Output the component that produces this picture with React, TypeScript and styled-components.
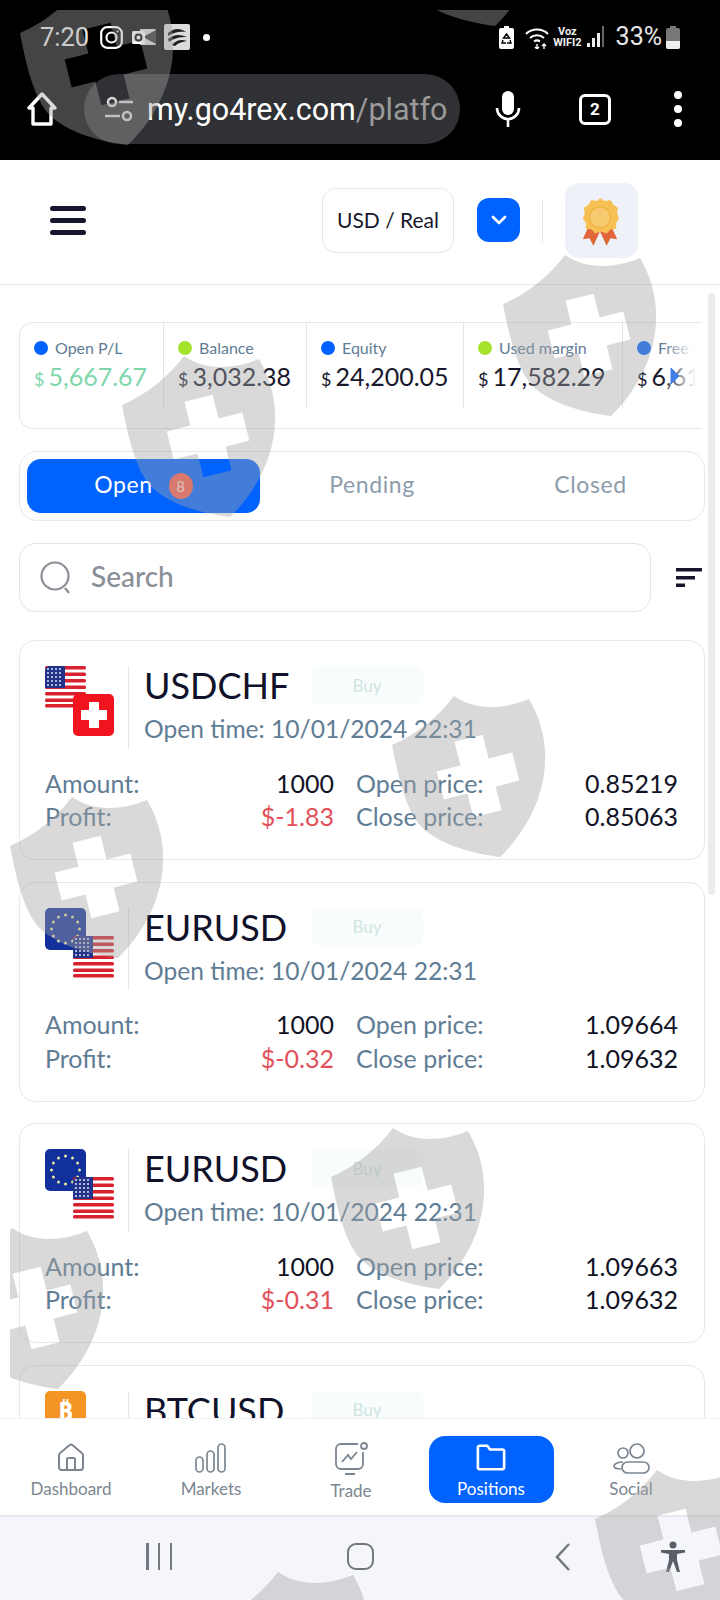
import React from 'react'
import styled, { createGlobalStyle } from 'styled-components'
import { ChevronDown, House } from 'lucide-react'

const GlobalStyle = createGlobalStyle`
  html, body {
    margin: 0;
    padding: 0;
    background: #fff;
  }
  * {
    box-sizing: border-box;
  }
`

const Phone = styled.div`
  position: relative;
  width: 720px;
  height: 1600px;
  overflow: hidden;
  display: flex;
  flex-direction: column;
  background: #fff;
  font-family: Lato, 'Noto Sans', sans-serif;
`

/* android status bar and browser toolbar */
const BlackTop = styled.div`
  height: 160px;
  flex: none;
  background: #000;
  color: #fff;
  font-family: Roboto, sans-serif;
`

const StatusBar = styled.div`
  height: 74px;
  padding: 25px 40px 0;
  display: flex;
  align-items: flex-start;
`

const Clock = styled.span`
  font-size: 25.5px;
  line-height: 24px;
  color: #e8e8e8;
  width: 60px;
`

const StatusIcons = styled.div`
  display: flex;
  align-items: center;
  gap: 8px;
  height: 24px;
`

const NotifyDot = styled.i`
  width: 7px;
  height: 7px;
  margin-left: 5px;
  border-radius: 50%;
  background: #fff;
`

const StatusRight = styled.div`
  margin-left: auto;
  display: flex;
  align-items: center;
  height: 24px;
`

const VoWifi = styled.div`
  font-size: 11px;
  line-height: 11px;
  font-weight: 700;
  text-align: center;
  margin: 0 5px 0 4px;
  color: #eee;
`

const Percent = styled.span`
  font-size: 25px;
  line-height: 24px;
  color: #e8e8e8;
  margin: 0 4px 0 11px;
`

const Toolbar = styled.div`
  height: 70px;
  display: flex;
  align-items: center;
  padding-left: 27px;
`

const UrlPill = styled.div`
  width: 376px;
  height: 70px;
  margin-left: 27px;
  padding-left: 21px;
  border-radius: 35px;
  background: #303134;
  display: flex;
  align-items: center;
  gap: 14px;
  font-size: 30.5px;
  white-space: nowrap;
  overflow: hidden;
`

const UrlPath = styled.span`
  color: #9a9a9a;
`

const TabCount = styled.div`
  width: 32px;
  height: 31px;
  margin-left: 58px;
  border: 3px solid #fff;
  border-radius: 6px;
  display: flex;
  align-items: center;
  justify-content: center;
  font-size: 17px;
  font-weight: 700;
`

const Kebab = styled.div`
  margin-left: 63px;
  display: flex;
  flex-direction: column;
  gap: 6px;
  i {
    width: 8px;
    height: 8px;
    border-radius: 50%;
    background: #fff;
  }
`

/* app header */
const Header = styled.header`
  height: 125px;
  flex: none;
  border-bottom: 1px solid #e6e6e8;
  display: flex;
  align-items: center;
  padding: 0 82px 4px 50px;
`

const Burger = styled.div`
  width: 36px;
  margin-right: auto;
  display: flex;
  flex-direction: column;
  gap: 7px;
  i {
    height: 5px;
    border-radius: 3px;
    background: #15152e;
  }
`

const AccountBox = styled.div`
  width: 132px;
  height: 65px;
  padding-bottom: 2px;
  border: 1px solid #e4e6ea;
  border-radius: 14px;
  display: flex;
  align-items: center;
  justify-content: center;
  font-size: 21px;
  color: #17182b;
`

const ChevronButton = styled.div`
  width: 43px;
  height: 44px;
  margin-left: 23px;
  border-radius: 12px;
  background: #0062ff;
  color: #fff;
  display: flex;
  align-items: center;
  justify-content: center;
`

const HeaderRule = styled.div`
  width: 1px;
  height: 43px;
  margin: 0 22px;
  background: #e4e6ea;
`

const RibbonBox = styled.div`
  width: 73px;
  height: 75px;
  padding: 4px 4px 0 0;
  border-radius: 14px;
  background: #eef2f8;
  display: flex;
  align-items: center;
  justify-content: center;
`

/* scrolling content */
const Main = styled.main`
  position: relative;
  flex: 1;
  min-height: 0;
  overflow: hidden;
  padding: 37px 15px 0 19px;
`

const Scrollbar = styled.div`
  position: absolute;
  top: 8px;
  right: 5px;
  width: 7px;
  height: 602px;
  border-radius: 4px;
  background: #ececee;
`

const Summary = styled.div`
  position: relative;
  height: 107px;
  margin-right: 3px;
  border: 1px solid #e6e8ec;
  border-right: none;
  border-radius: 14px 0 0 14px;
  display: flex;
  overflow: hidden;
`

const SummaryCell = styled.div<{ $width: number }>`
  flex: 0 0 ${p => p.$width}px;
  height: 85px;
  padding: 15px 0 0 14px;
  border-right: 1px solid #e3e5e9;
  white-space: nowrap;
`

const SummaryLabel = styled.div`
  display: flex;
  align-items: center;
  gap: 7px;
  font-size: 16px;
  line-height: 20px;
  color: #5f7d95;
`

const Dot = styled.i<{ $color: string }>`
  width: 14px;
  height: 14px;
  border-radius: 50%;
  background: ${p => p.$color};
`

const SummaryValue = styled.div<{ $color: string }>`
  margin-top: 2px;
  font-size: 25px;
  line-height: 32px;
  color: ${p => p.$color};
  small {
    font-size: 18px;
    margin-right: 4px;
  }
`

const SummaryFade = styled.div`
  position: absolute;
  top: 0;
  right: 0;
  bottom: 0;
  width: 40px;
  background: linear-gradient(to right, rgba(255, 255, 255, 0), #fff 85%);
`

const NextArrow = styled.svg`
  position: absolute;
  top: 44px;
  right: 22px;
`

const Tabs = styled.div`
  height: 70px;
  margin-top: 22px;
  padding: 7px;
  border: 1px solid #e6e8ec;
  border-radius: 18px;
  display: grid;
  grid-template-columns: 233px 224px 1fr;
  align-items: center;
`

const Tab = styled.div<{ $active?: boolean }>`
  height: 54px;
  padding-bottom: 5px;
  border-radius: 14px;
  display: flex;
  align-items: center;
  justify-content: center;
  gap: 16px;
  font-size: 23px;
  letter-spacing: 0.6px;
  color: ${p => (p.$active ? '#fff' : '#8c9cab')};
  background: ${p => (p.$active ? '#0062ff' : 'transparent')};
`

const TabBadge = styled.span`
  width: 24px;
  height: 26px;
  margin-top: 5px;
  border-radius: 50%;
  background: #ff5a45;
  display: flex;
  align-items: center;
  justify-content: center;
  font-size: 15px;
  letter-spacing: 0;
  color: #ffd9d2;
`

const SearchRow = styled.div`
  margin-top: 22px;
  padding-right: 3px;
  display: flex;
  align-items: center;
  justify-content: space-between;
`

const SearchBox = styled.div`
  width: 632px;
  height: 69px;
  padding: 0 0 3px 20px;
  border: 1px solid #e2e4e8;
  border-radius: 16px;
  display: flex;
  align-items: center;
  gap: 19px;
  font-size: 28px;
  font-weight: 500;
  color: #8a8f96;
`

const Cards = styled.div`
  margin-top: 28px;
  display: flex;
  flex-direction: column;
  gap: 21.5px;
`

const Card = styled.article`
  flex: none;
  height: 220px;
  padding: 25px 24px 0 25px;
  border: 1px solid #e6e8ec;
  border-radius: 16px;
`

const CardTop = styled.div`
  display: flex;
  height: 82px;
`

const FlagSlot = styled.div`
  width: 84px;
  border-right: 1px solid #e3e5e9;
`

const CardHead = styled.div`
  margin-left: 15px;
`

const TitleRow = styled.div`
  display: flex;
  align-items: center;
  height: 38px;
`

const Symbol = styled.div`
  width: 167px;
  font-size: 36px;
  line-height: 38px;
  color: #10122a;
`

const BuyChip = styled.div`
  width: 112px;
  height: 38px;
  border-radius: 8px;
  background: #f9fcfc;
  display: flex;
  align-items: center;
  justify-content: center;
  font-size: 17px;
  color: #cde6e0;
`

const OpenTime = styled.div`
  margin-top: 10px;
  font-size: 24.6px;
  line-height: 30px;
  color: #5f7d95;
`

const StatGrid = styled.div`
  margin-top: 18px;
  display: grid;
  grid-template-columns: 289px 322px;
  column-gap: 22px;
`

const Stat = styled.div`
  height: 33.5px;
  display: flex;
  align-items: center;
  justify-content: space-between;
  font-size: 25px;
  color: #5f7d95;
`

const StatValue = styled.span<{ $loss?: boolean }>`
  color: ${p => (p.$loss ? '#e2515a' : '#111325')};
`

/* bottom navigation */
const BottomNav = styled.nav`
  position: relative;
  height: 99px;
  flex: none;
  padding: 17px 19px 16px 1px;
  background: #fff;
  border-top: 1px solid #eff0f2;
  border-bottom: 2px solid #e6e7ea;
  display: grid;
  grid-template-columns: repeat(5, 140px);
`

const NavItem = styled.div<{ $active?: boolean }>`
  justify-self: center;
  width: ${p => (p.$active ? '125px' : '120px')};
  border-radius: 16px;
  display: flex;
  flex-direction: column;
  align-items: center;
  gap: ${p => (p.$active ? '5px' : '3px')};
  padding-top: 6px;
  font-size: 17px;
  line-height: 24px;
  color: ${p => (p.$active ? '#fff' : '#7b8691')};
  background: ${p => (p.$active ? '#0062ff' : 'transparent')};
`

const SystemNav = styled.div`
  flex: none;
  height: 83px;
  background: #f5f6fb;
  padding: 26px 34px 0 146px;
  display: flex;
  align-items: flex-start;
  color: #6f7278;
`

const MenuLines = styled.div`
  width: 26px;
  height: 27px;
  display: flex;
  justify-content: space-between;
  i {
    width: 2.5px;
    background: #74777d;
  }
`

const HomeSquare = styled.div`
  width: 27px;
  height: 27px;
  margin-left: 175px;
  border: 2.5px solid #74777d;
  border-radius: 9px;
`

const BackGap = styled.div`
  margin-left: 181px;
`

const PersonGap = styled.div`
  margin-left: 89px;
  margin-top: -2px;
`

/* the translucent shields over the whole photo */
const Watermark = styled.svg`
  position: absolute;
  top: 10px;
  left: 10px;
  pointer-events: none;
`

const crossPath = () => {
  const a = 39
  const b = 14.5
  const pts = [
    [-b, -a], [b, -a], [b, -b], [a, -b], [a, b], [b, b],
    [b, a], [-b, a], [-b, b], [-a, b], [-a, -b], [-b, -b],
  ]
  const cos = Math.cos((14 * Math.PI) / 180)
  const sin = Math.sin((14 * Math.PI) / 180)
  const out = pts.map(([x, y]) => `${(86 + x * cos + y * sin).toFixed(1)} ${(80 - x * sin + y * cos).toFixed(1)}`)
  return `M${out.join('L')}Z`
}

const shieldPath =
  'M0 49C25 38 45 22 62 0C82 14 110 14 137 3C148 22 154 42 153 66C152 100 135 135 108 161C85 158 45 150 26 127C12 108 5 75 0 49Z' +
  crossPath()

const shields = [
  [20, -16], [387, -135], [503, 255], [122, 356], [392, 696],
  [10, 797], [331, 1128], [-50, 1228], [595, 1470], [216, 1572],
]

const Shields = () => (
  <Watermark width="710" height="1590" viewBox="10 10 710 1590">
    {shields.map(([x, y]) => (
      <path
        key={`${x}-${y}`}
        d={shieldPath}
        transform={`translate(${x} ${y})`}
        fill="rgba(163,163,163,0.416)"
        fillRule="evenodd"
      />
    ))}
  </Watermark>
)

const UsFlag = () => (
  <>
    <rect width="41" height="42" rx="5" fill="#fff" />
    {[0, 6.5, 13, 19.5, 26, 32.5, 38].map(y => (
      <rect key={y} y={y} width="41" height="3.6" rx="1.5" fill="#d8232f" />
    ))}
    <path d="M0 5a5 5 0 0 1 5-5h15v22H0z" fill="#22338a" />
    {[3, 7, 11, 15, 19].map(y =>
      [3, 7, 11, 15].map(x => <circle key={`${x}${y}`} cx={x} cy={y} r="1" fill="#dfe4f5" />)
    )}
  </>
)

const SwissFlag = () => (
  <>
    <rect width="41" height="42" rx="5" fill="#f0141e" />
    <path d="M16 8h10v8h8v10h-8v8H16v-8H8V16h8z" fill="#fff" />
  </>
)

const EuFlag = () => (
  <>
    <rect width="41" height="42" rx="5" fill="#12309b" />
    {Array.from({ length: 12 }, (_, i) => {
      const a = (i * Math.PI) / 6
      return <circle key={i} cx={20.5 + 14 * Math.cos(a)} cy={21 + 14 * Math.sin(a)} r="1.5" fill="#e8e6a0" />
    })}
  </>
)

const BtcFlag = () => (
  <>
    <rect width="41" height="42" rx="5" fill="#f39425" />
    <text x="20.5" y="30" textAnchor="middle" fontFamily="'Noto Sans', sans-serif" fontSize="26" fontWeight="700" fill="#fff">
      ₿
    </text>
  </>
)

const flagMap = { US: UsFlag, CH: SwissFlag, EU: EuFlag, BTC: BtcFlag }

const FlagPair = ({ first, second }: { first: keyof typeof flagMap; second?: keyof typeof flagMap }) => {
  const A = flagMap[first]
  const B = second ? flagMap[second] : null
  return (
    <svg width="69" height="70" viewBox="0 0 69 70">
      <g>
        <A />
      </g>
      {B && (
        <g transform="translate(28 28)">
          <B />
        </g>
      )}
    </svg>
  )
}

const positions = [
  { symbol: 'USDCHF', a: 'US', b: 'CH', open: '0.85219', close: '0.85063', profit: '$-1.83' },
  { symbol: 'EURUSD', a: 'EU', b: 'US', open: '1.09664', close: '1.09632', profit: '$-0.32' },
  { symbol: 'EURUSD', a: 'EU', b: 'US', open: '1.09663', close: '1.09632', profit: '$-0.31' },
  { symbol: 'BTCUSD', a: 'BTC', open: '', close: '', profit: '' },
] as const

const stats = [
  { label: 'Open P/L', value: '5,667.67', dot: '#0062ff', color: '#7fd6ad', width: 144 },
  { label: 'Balance', value: '3,032.38', dot: '#a4e22b', color: '#17182b', width: 143 },
  { label: 'Equity', value: '24,200.05', dot: '#0062ff', color: '#17182b', width: 157 },
  { label: 'Used margin', value: '17,582.29', dot: '#a4e22b', color: '#17182b', width: 159 },
  { label: 'Free margin', value: '6,617.76', dot: '#0062ff', color: '#17182b', width: 159 },
]

export default function App() {
  return (
    <Phone>
      <GlobalStyle />
      <BlackTop>
        <StatusBar>
          <Clock>7:20</Clock>
          <StatusIcons>
            <svg width="23" height="23" viewBox="0 0 23 23" fill="none" stroke="#fff" strokeWidth="2.2">
              <rect x="1.2" y="1.2" width="20.6" height="20.6" rx="6" />
              <circle cx="11.5" cy="11.5" r="5" />
              <circle cx="17.5" cy="5.5" r="1" fill="#fff" stroke="none" />
            </svg>
            <svg width="25" height="22" viewBox="0 0 25 22">
              <rect x="9" y="3" width="16" height="16" rx="1" fill="#d8d8d8" />
              <path d="M12 11l13-7v14z" fill="#333" />
              <rect x="1" y="5" width="13" height="13" rx="1.5" fill="#fff" />
              <circle cx="7.5" cy="11.5" r="3" fill="none" stroke="#000" strokeWidth="2" />
            </svg>
            <svg width="26" height="26" viewBox="0 0 26 26">
              <rect width="26" height="26" rx="2" fill="#dcdcdc" />
              <path d="M4 9C10 4 16 4 22 8C16 7 10 8 4 12zM4 15C10 10 16 10 23 13C16 13 10 14 5 18zM8 21C12 16 17 15 23 17C18 18 14 19 11 22z" fill="#222" />
            </svg>
            <NotifyDot />
          </StatusIcons>
          <StatusRight>
            <svg width="15" height="23" viewBox="0 0 15 23">
              <path d="M5 0h5v2h3a2 2 0 0 1 2 2v17a2 2 0 0 1-2 2H2a2 2 0 0 1-2-2V4a2 2 0 0 1 2-2h3z" fill="#fff" />
              <path d="M7.500 8l3 4h-6zM4 14l-1 3h4M11 14l1 3H8" fill="none" stroke="#000" strokeWidth="1.4" />
            </svg>
            <svg width="24" height="23" viewBox="0 0 24 23" fill="none" stroke="#fff" strokeWidth="2" style={{ marginLeft: 11 }}>
              <path d="M1 8a16 16 0 0 1 22 0M5 12a10.500 10.500 0 0 1 14 0M9 15.500a5 5 0 0 1 6 0" />
              <path d="M12 18v5M10 21l2 2 2-2M19 23v-5M17 20l2-2 2 2" strokeWidth="1.4" />
            </svg>
            <VoWifi>
              Voz
              <br />
              WIFI2
            </VoWifi>
            <svg width="18" height="24" viewBox="0 0 18 24" fill="#eee">
              <rect x="0" y="18" width="3" height="4" />
              <rect x="5" y="13" width="3" height="9" />
              <rect x="10" y="8" width="3" height="14" />
              <rect x="15" y="1" width="2" height="21" fill="#666" />
            </svg>
            <Percent>33%</Percent>
            <svg width="14" height="23" viewBox="0 0 14 23">
              <path d="M4 0h6v2h2a2 2 0 0 1 2 2v17a2 2 0 0 1-2 2H2a2 2 0 0 1-2-2V4a2 2 0 0 1 2-2h2z" fill="#777" />
              <path d="M0 15h14v6a2 2 0 0 1-2 2H2a2 2 0 0 1-2-2z" fill="#eee" />
            </svg>
          </StatusRight>
        </StatusBar>
        <Toolbar>
          <svg width="30" height="34" viewBox="0 0 30 34" fill="none" stroke="#fff" strokeWidth="3.4" strokeLinejoin="round">
            <path d="M15 2L2 16h4v16h18V16h4z" />
          </svg>
          <UrlPill>
            <svg width="28" height="26" viewBox="0 0 28 26" fill="none" stroke="#d5d5d5" strokeWidth="2.6" style={{ flex: 'none' }}>
              <circle cx="7" cy="6" r="4" />
              <path d="M14 6h14M0 20h15" />
              <circle cx="22" cy="20" r="4" />
            </svg>
            <span>
              my.go4rex.com<UrlPath>/platfo</UrlPath>
            </span>
          </UrlPill>
          <svg width="26" height="36" viewBox="0 0 26 36" fill="none" style={{ marginLeft: 35 }}>
            <rect x="7" y="0" width="12" height="24" rx="6" fill="#fff" />
            <path d="M2 17a11 11 0 0 0 22 0M13 28v8" stroke="#fff" strokeWidth="2.6" />
          </svg>
          <TabCount>2</TabCount>
          <Kebab>
            <i />
            <i />
            <i />
          </Kebab>
        </Toolbar>
      </BlackTop>

      <Header>
        <Burger>
          <i />
          <i />
          <i />
        </Burger>
        <AccountBox>USD / Real</AccountBox>
        <ChevronButton>
          <ChevronDown size={24} strokeWidth={2.6} />
        </ChevronButton>
        <HeaderRule />
        <RibbonBox>
          <svg width="40" height="50" viewBox="0 0 42 52">
            <path d="M10 28L3 44l7-1 4 8 8-17zM32 28l7 16-7-1-4 8-8-17z" fill="#e0673a" />
            <path
              d="M21 1l5 3 6-1 3 5 5 3-1 6 2 5-3 5 0 6-6 1-4 4-6-2-6 2-4-4-6-1 0-6-3-5 2-5-1-6 5-3 3-5 6 1z"
              fill="#f7c055"
            />
            <circle cx="21" cy="21" r="11" fill="#f8ca70" stroke="#f0b448" strokeWidth="1.5" />
          </svg>
        </RibbonBox>
      </Header>

      <Main>
        <Summary>
          {stats.map(s => (
            <SummaryCell key={s.label} $width={s.width}>
              <SummaryLabel>
                <Dot $color={s.dot} />
                {s.label}
              </SummaryLabel>
              <SummaryValue $color={s.color}>
                <small>$</small>
                {s.value}
              </SummaryValue>
            </SummaryCell>
          ))}
          <SummaryFade />
          <NextArrow width="10" height="18" viewBox="0 0 10 18">
            <path d="M1 1l8 8-8 8z" fill="#3f7fe6" stroke="#3f7fe6" />
          </NextArrow>
        </Summary>

        <Tabs>
          <Tab $active>
            Open
            <TabBadge>8</TabBadge>
          </Tab>
          <Tab>Pending</Tab>
          <Tab>Closed</Tab>
        </Tabs>

        <SearchRow>
          <SearchBox>
            <svg width="32" height="34" viewBox="0 0 32 34" fill="none" stroke="#8a8f96" strokeWidth="2.2" style={{ flex: 'none', marginTop: 3 }}>
              <circle cx="15" cy="15" r="13.500" />
              <path d="M25 27l4 5" />
            </svg>
            Search
          </SearchBox>
          <svg width="26" height="19" viewBox="0 0 26 19" fill="#15152e">
            <rect width="26" height="3.500" />
            <rect y="8" width="19" height="3.500" />
            <rect y="15.500" width="9" height="3.500" />
          </svg>
        </SearchRow>

        <Cards>
          {positions.map((p, i) => (
            <Card key={i}>
              <CardTop>
                <FlagSlot>
                  <FlagPair first={p.a} second={'b' in p ? p.b : undefined} />
                </FlagSlot>
                <CardHead>
                  <TitleRow>
                    <Symbol>{p.symbol}</Symbol>
                    <BuyChip>Buy</BuyChip>
                  </TitleRow>
                  <OpenTime>Open time: 10/01/2024 22:31</OpenTime>
                </CardHead>
              </CardTop>
              <StatGrid>
                <Stat>
                  Amount:<StatValue>1000</StatValue>
                </Stat>
                <Stat>
                  Open price:<StatValue>{p.open}</StatValue>
                </Stat>
                <Stat>
                  Profit:<StatValue $loss>{p.profit}</StatValue>
                </Stat>
                <Stat>
                  Close price:<StatValue>{p.close}</StatValue>
                </Stat>
              </StatGrid>
            </Card>
          ))}
        </Cards>
        <Scrollbar />
      </Main>

      <BottomNav>
        <NavItem>
          <House size={32} strokeWidth={1.5} />
          Dashboard
        </NavItem>
        <NavItem>
          <svg width="32" height="32" viewBox="0 0 32 32" fill="none" stroke="#7b8691" strokeWidth="1.7">
            <rect x="1" y="15" width="7" height="15" rx="3.500" />
            <rect x="12" y="9" width="7" height="21" rx="3.500" />
            <rect x="23" y="2" width="7" height="28" rx="3.500" />
          </svg>
          Markets
        </NavItem>
        <NavItem>
          <svg width="34" height="34" viewBox="0 0 34 34" fill="none" stroke="#7b8691" strokeWidth="1.8">
            <path d="M24 2H7a5 5 0 0 0-5 5v15a5 5 0 0 0 5 5h17a5 5 0 0 0 5-5V10" />
            <circle cx="30" cy="4" r="3" />
            <path d="M8 20l6-7 3 4 6-7M11 32h10" />
          </svg>
          Trade
        </NavItem>
        <NavItem $active>
          <svg width="32" height="30" viewBox="0 0 32 32" fill="none" stroke="#fff" strokeWidth="2.8">
            <path d="M2 6a2 2 0 0 1 2-2h8l3 4h13a2 2 0 0 1 2 2v17a2 2 0 0 1-2 2H4a2 2 0 0 1-2-2z" />
          </svg>
          Positions
        </NavItem>
        <NavItem>
          <svg width="38" height="32" viewBox="0 0 38 32" fill="none" stroke="#7b8691" strokeWidth="1.7">
            <circle cx="11" cy="11" r="5" />
            <circle cx="25" cy="9" r="7" />
            <path d="M11 20c-5 0-9 2-9 4s3 3 7 3" />
            <rect x="10" y="20" width="27" height="11" rx="5.500" />
          </svg>
          Social
        </NavItem>
      </BottomNav>

      <SystemNav>
        <MenuLines>
          <i />
          <i />
          <i />
        </MenuLines>
        <HomeSquare />
        <BackGap>
          <svg width="16" height="28" viewBox="0 0 16 28" fill="none" stroke="#74777d" strokeWidth="2.5">
            <path d="M14 1L2 14l12 13" />
          </svg>
        </BackGap>
        <PersonGap>
          <svg width="26" height="32" viewBox="0 0 26 32" fill="#5b5e64">
            <circle cx="13" cy="4" r="3.500" />
            <path d="M1 9h24v2.500l-8 1.500v6l3 12h-3l-4-11-4 11H6l3-12v-6l-8-1.500z" />
          </svg>
        </PersonGap>
      </SystemNav>

      <Shields />
    </Phone>
  )
}
